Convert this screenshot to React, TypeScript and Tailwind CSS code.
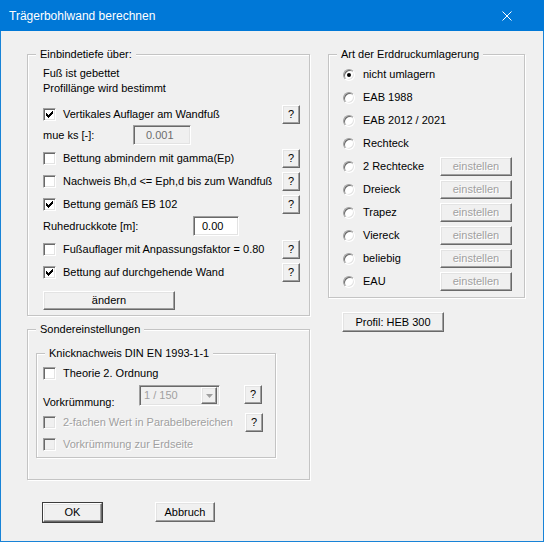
import type { ReactNode } from 'react';

const raised =
  'border border-t-white border-l-white border-b-[#696969] border-r-[#696969] shadow-[inset_-1px_-1px_0_#a0a0a0,inset_1px_1px_0_#e3e3e3] bg-[#f0f0f0]';
const sunken =
  'border border-t-[#a0a0a0] border-l-[#a0a0a0] border-b-white border-r-white shadow-[inset_1px_1px_0_#696969,inset_-1px_-1px_0_#e3e3e3]';
const grayText = 'text-[#a0a0a0] [text-shadow:1px_1px_0_#ffffff]';

function Btn({
  children,
  className = '',
  disabled = false,
}: {
  children: ReactNode;
  className?: string;
  disabled?: boolean;
}) {
  return (
    <button
      type="button"
      className={`flex shrink-0 items-center justify-center leading-none ${raised} ${
        disabled ? grayText : 'text-black'
      } ${className}`}
    >
      {children}
    </button>
  );
}

function Help() {
  return <Btn className="w-[18px] h-[19px]">?</Btn>;
}

function CheckMark() {
  // classic 7x7 tick, one column at a time
  const cols = [2, 3, 4, 3, 2, 1, 0];
  return (
    <svg width="7" height="7" viewBox="0 0 7 7" shapeRendering="crispEdges">
      {cols.map((y, x) => (
        <rect key={x} x={x} y={y} width="1" height="3" fill="#000" />
      ))}
    </svg>
  );
}

function Check({ checked = false, disabled = false }: { checked?: boolean; disabled?: boolean }) {
  return (
    <span
      className={`flex w-[13px] h-[13px] shrink-0 items-center justify-center ${sunken} ${
        disabled ? 'bg-[#f0f0f0]' : 'bg-white'
      }`}
    >
      {checked && <CheckMark />}
    </span>
  );
}

function CheckRow({
  label,
  checked,
  help,
  disabled,
  className = 'h-[23px]',
}: {
  label: string;
  checked?: boolean;
  help?: boolean;
  disabled?: boolean;
  className?: string;
}) {
  return (
    <div className={`flex items-center ${className}`}>
      <Check checked={checked} disabled={disabled} />
      <span className={`ml-[7px] ${disabled ? grayText : ''}`}>{label}</span>
      {help && (
        <span className="ml-auto">
          <Help />
        </span>
      )}
    </div>
  );
}

function Radio({ selected = false }: { selected?: boolean }) {
  return (
    <span
      className={`flex w-[12px] h-[12px] shrink-0 items-center justify-center rounded-full bg-white ${sunken}`}
    >
      {selected && <span className="w-[4px] h-[4px] rounded-full bg-black" />}
    </span>
  );
}

function Group({
  title,
  className = '',
  children,
}: {
  title: string;
  className?: string;
  children: ReactNode;
}) {
  return (
    <div
      className={`relative border border-[#c4c4c4] shadow-[inset_1px_1px_0_#ffffff,1px_1px_0_#ffffff] ${className}`}
    >
      <span className="absolute -top-[8px] left-[8px] bg-[#f0f0f0] px-[4px] leading-[14px]">{title}</span>
      {children}
    </div>
  );
}

const umlagerung = [
  { label: 'nicht umlagern', selected: true },
  { label: 'EAB 1988' },
  { label: 'EAB 2012 / 2021' },
  { label: 'Rechteck' },
  { label: '2 Rechtecke', btn: true },
  { label: 'Dreieck', btn: true },
  { label: 'Trapez', btn: true },
  { label: 'Viereck', btn: true },
  { label: 'beliebig', btn: true },
  { label: 'EAU', btn: true },
];

export default function App() {
  return (
    <div className="w-[544px] h-[542px] flex flex-col font-['Liberation_Sans',Arial,sans-serif] text-[11px] leading-[13px] text-black">
      <div className="h-[31px] shrink-0 flex items-center justify-between bg-[#0078d7] pl-[9px] pr-[32px] text-white">
        <span className="text-[12px] leading-[16px]">Trägerbohlwand berechnen</span>
        <svg width="10" height="10" viewBox="0 0 10 10">
          <path d="M0.5 0.5 L9.5 9.5 M9.5 0.5 L0.5 9.5" stroke="#ffffff" strokeWidth="1" />
        </svg>
      </div>

      <div className="flex-1 bg-[#f0f0f0] border-x border-b border-[#1883d7] pl-[26px] pt-[23px]">
        <div className="flex items-start">
          <div className="w-[283px]">
            <Group title="Einbindetiefe über:" className="pl-[15px] pr-[9px] pt-[11px] pb-[5px]">
              <div className="leading-[15px]">Fuß ist gebettet</div>
              <div className="leading-[15px]">Profillänge wird bestimmt</div>
              <CheckRow label="Vertikales Auflager am Wandfuß" checked help className="mt-[7px] h-[22px]" />
              <div className="flex items-center h-[20px]">
                <span className="w-[90px]">mue ks [-]:</span>
                <div className={`w-[58px] h-[20px] flex items-center pl-[12px] bg-[#f0f0f0] text-[#6d6d6d] ${sunken}`}>
                  0.001
                </div>
              </div>
              <CheckRow label="Bettung abmindern mit gamma(Ep)" help className="mt-[2px] h-[23px]" />
              <CheckRow label="Nachweis Bh,d <= Eph,d bis zum Wandfuß" help />
              <CheckRow label="Bettung gemäß EB 102" checked help />
              <div className="flex items-center h-[20px]">
                <span className="w-[150px]">Ruhedruckkote [m]:</span>
                <div className={`w-[46px] h-[20px] flex items-center pl-[8px] bg-white ${sunken}`}>0.00</div>
              </div>
              <CheckRow label="Fußauflager mit Anpassungsfaktor = 0.80" help className="mt-[2px] h-[23px]" />
              <CheckRow label="Bettung auf durchgehende Wand" checked help />
              <Btn className="mt-[7px] w-[132px] h-[19px]">ändern</Btn>
            </Group>

            <Group title="Sondereinstellungen" className="mt-[13px] pl-[8px] pt-[23px] pb-[21px]">
              <Group title="Knicknachweis DIN EN 1993-1-1" className="w-[240px] pl-[6px] pr-[12px] pt-[8px] pb-[3px]">
                <CheckRow label="Theorie 2. Ordnung" />
                <div className="flex items-start h-[22px]">
                  <span className="w-[96px] mt-[11px]">Vorkrümmung:</span>
                  <div className={`w-[81px] h-[21px] flex items-center justify-between pl-[4px] pr-[2px] bg-[#f0f0f0] ${sunken}`}>
                    <span className="text-[#a0a0a0]">1 / 150</span>
                    <span className={`w-[16px] h-[17px] flex items-center justify-center ${raised}`}>
                      <svg width="7" height="4" viewBox="0 0 7 4">
                        <path d="M0 0 H7 L3.5 4 Z" fill="#a0a0a0" />
                      </svg>
                    </span>
                  </div>
                  <span className="ml-[24px]">
                    <Help />
                  </span>
                </div>
                <CheckRow label="2-fachen Wert in Parabelbereichen" disabled help className="mt-[4px] h-[23px]" />
                <CheckRow label="Vorkrümmung zur Erdseite" disabled className="h-[20px]" />
              </Group>
            </Group>
          </div>

          <div className="ml-[18px] w-[197px]">
            <Group title="Art der Erddruckumlagerung" className="pl-[14px] pr-[12px] pt-[8px] pb-[4px]">
              {umlagerung.map((r) => (
                <div key={r.label} className="flex items-center h-[23px]">
                  <Radio selected={r.selected} />
                  <span className="ml-[8px]">{r.label}</span>
                  {r.btn && (
                    <Btn disabled className="ml-auto w-[72px] h-[19px]">
                      einstellen
                    </Btn>
                  )}
                </div>
              ))}
            </Group>
            <Btn className="mt-[14px] ml-[14px] w-[102px] h-[20px]">Profil: HEB 300</Btn>
          </div>
        </div>

        <div className="flex items-start mt-[22px] ml-[15px]">
          <div className="border border-[#3c3c3c]">
            <Btn className="w-[59px] h-[19px]">OK</Btn>
          </div>
          <Btn className="ml-[52px] w-[60px] h-[20px]">Abbruch</Btn>
        </div>
      </div>
    </div>
  );
}
